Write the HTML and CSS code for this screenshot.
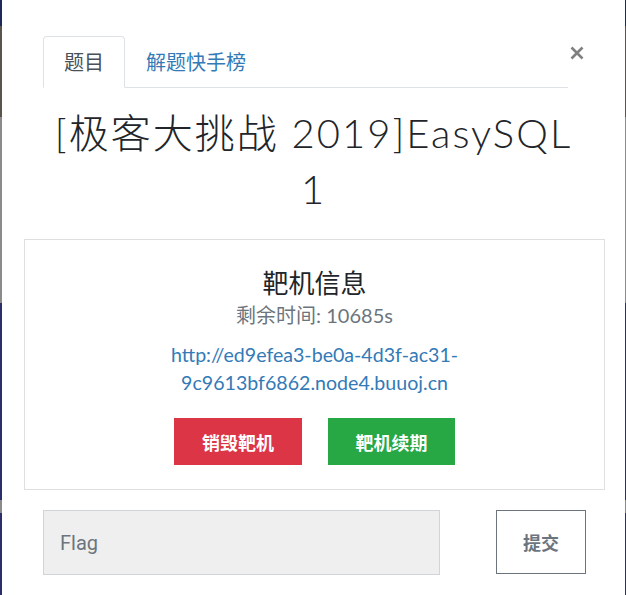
FILE: index.html
```html
<!DOCTYPE html>
<html lang="zh">
<head>
<meta charset="utf-8">
<title>EasySQL</title>
<link rel="stylesheet" href="styles.css">
</head>
<body>
<div class="modal">
  <div class="modal-header">
    <ul class="tabs">
      <li class="tab active">题目</li>
      <li class="tab"><a class="tab-link" href="#">解题快手榜</a></li>
    </ul>
    <button class="close" type="button" aria-label="Close">
      <svg width="14" height="14" viewBox="0 0 14 14"><path d="M1.5 1.5 L12.5 12.5 M12.5 1.5 L1.5 12.5" stroke="#808080" stroke-width="2.6" fill="none"/></svg>
    </button>
  </div>
  <h1 class="title">[极客大挑战 2019]EasySQL 1</h1>
  <div class="card">
    <h3 class="card-title">靶机信息</h3>
    <p class="remain">剩余时间: 10685s</p>
    <a class="url" href="#">http://ed9efea3-be0a-4d3f-ac31-9c9613bf6862.node4.buuoj.cn</a>
    <div class="btns">
      <button class="btn btn-red" type="button">销毁靶机</button>
      <button class="btn btn-green" type="button">靶机续期</button>
    </div>
  </div>
  <div class="flag-row">
    <input class="flag-input" type="text" placeholder="Flag">
    <button class="submit" type="button">提交</button>
  </div>
</div>
</body>
</html>
```
FILE: styles.css
```css
html, body {
  margin: 0;
  padding: 0;
  height: 595px;
  overflow: hidden;
}
body {
  background: linear-gradient(to bottom,
    #1d2958 0 26px,
    #5b544d 26px 117px,
    #8b8b8b 117px 303px,
    #2b2e6a 303px 500px,
    #8a8a8a 500px 513px,
    #2b2e6a 513px 595px);
  font-family: Lato, "Noto Sans CJK SC", sans-serif;
  color: #212529;
}
.modal {
  margin: 0 1px 0 2px;
  height: 595px;
  background: #fff;
  box-sizing: border-box;
  padding-top: 36px;
}
.modal-header {
  display: flex;
  align-items: flex-start;
  padding: 0 41px 0 41px;
}
.tabs {
  flex: 1;
  display: flex;
  list-style: none;
  margin: 0;
  padding: 0;
  border-bottom: 1px solid #dee2e6;
}
.tab {
  font-family: "Noto Sans CJK SC", sans-serif;
  font-size: 20px;
  line-height: 30px;
  padding: 10px 20px;
  border: 1px solid transparent;
  border-radius: 4px 4px 0 0;
  margin-bottom: -1px;
}
.tab.active {
  color: #495057;
  border-color: #dee2e6 #dee2e6 #fff;
  background: #fff;
}
.tab-link {
  color: #337ab7;
  text-decoration: none;
}
.close {
  border: 0;
  background: none;
  padding: 0;
  margin: 10px 0 0 2px;
  width: 14px;
  height: 14px;
  line-height: 0;
}
.title {
  margin: 17px 0 0;
  font-family: Lato, "Noto Sans CJK SC", sans-serif;
  font-weight: 300;
  font-size: 40px;
  line-height: 56px;
  letter-spacing: 2px;
  text-align: center;
  padding: 0 45px;
  color: #212529;
}
.card {
  margin: 22px 20px 0 22px;
  border: 1px solid #dfdfdf;
  padding: 27px 20px 24px;
  text-align: center;
}
.card-title {
  margin: 0;
  font-family: "Noto Sans CJK SC", sans-serif;
  font-weight: 400;
  font-size: 26px;
  line-height: 30px;
  color: #212529;
}
.remain {
  margin: 5px 0 0;
  font-size: 20px;
  line-height: 27px;
  color: #6c757d;
}
.url {
  display: block;
  max-width: 480px;
  margin: 12px auto 0;
  font-size: 19.6px;
  line-height: 28px;
  color: #337ab7;
  text-decoration: none;
}
.btns {
  display: flex;
  justify-content: center;
  gap: 26px;
  margin-top: 21px;
}
.btn {
  width: 128px;
  height: 47px;
  border: 0;
  color: #fff;
  font-family: "Noto Sans CJK SC", sans-serif;
  font-weight: 700;
  font-size: 18px;
  padding: 0;
}
.btn-red { background: #dc3545; }
.btn-green { background: #28a745; width: 127px; }
.flag-row {
  display: flex;
  justify-content: space-between;
  align-items: flex-start;
  margin-top: 20px;
  padding: 0 39px 0 41px;
}
.flag-input {
  box-sizing: border-box;
  width: 397px;
  height: 65px;
  margin: 0;
  background: #efefef;
  border: 1px solid #cfd5db;
  padding: 0 16px;
  font-family: Roboto, sans-serif;
  font-size: 20px;
  color: #495057;
  outline: none;
}
.flag-input::placeholder {
  color: #6c757d;
}
.submit {
  box-sizing: border-box;
  width: 90px;
  height: 64px;
  background: #fff;
  border: 1px solid #6c757d;
  color: #6c757d;
  font-family: "Noto Sans CJK SC", sans-serif;
  font-weight: 700;
  font-size: 18px;
  padding: 0;
}
```
